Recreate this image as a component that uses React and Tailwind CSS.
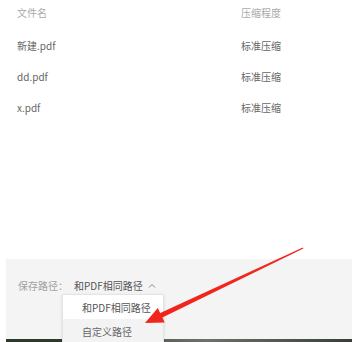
import React from "react";

const rows = [
  { name: "新建.pdf", level: "标准压缩" },
  { name: "dd.pdf", level: "标准压缩" },
  { name: "x.pdf", level: "标准压缩" },
];

const font = { fontFamily: '"Noto Sans CJK SC", "Noto Sans", sans-serif' };

function App() {
  return (
    <div
      className="relative w-[355px] h-[342px] bg-white overflow-hidden flex flex-col"
      style={font}
    >
      {/* file table */}
      <div className="pl-[17px]">
        <div className="h-[24px] flex items-center text-[10px] text-[#aaaaaa]">
          <span className="w-[224px]">文件名</span>
          <span>压缩程度</span>
        </div>
        <div className="pt-[6px]">
          {rows.map((row) => (
            <div
              key={row.name}
              className="h-[31px] flex items-center text-[10px] text-[#666666]"
            >
              <span className="w-[224px]">{row.name}</span>
              <span>{row.level}</span>
            </div>
          ))}
        </div>
      </div>

      <div className="flex-1" />

      {/* save path bar */}
      <div className="mx-[6px] mr-[3px] h-[80px] bg-[#f4f4f4] pt-[20px] pl-[12px]">
        <div className="flex items-center h-[14px] text-[10px] leading-[14px]">
          <span className="text-[#a0a0a0] w-[56px]">保存路径：</span>
          <span className="text-[#555555]">和PDF相同路径</span>
          <svg width="8" height="6" viewBox="0 0 8 6" className="ml-[5px]">
            <path d="M1 4.5 L4 1.5 L7 4.5" fill="none" stroke="#888" strokeWidth="1" />
          </svg>
        </div>
      </div>

      {/* image strip below */}
      <div className="mx-[6px] mr-[3px] h-[3px] flex">
        <div className="w-[56px] bg-[#2e3b2b]" />
        <div className="flex-1 bg-gradient-to-r from-[#3c403c] via-[#6d706b] to-[#3a3e3a]" />
      </div>

      {/* dropdown menu */}
      <div className="absolute left-[62px] top-[294px] w-[102px] border border-[#e4e4e4] bg-white shadow-sm text-[10px] text-[#555555]">
        <div className="h-[24px] flex items-center pl-[19px] bg-white">和PDF相同路径</div>
        <div className="h-[24px] flex items-center pl-[19px] bg-[#f3f3f3] text-[#666666]">自定义路径</div>
      </div>

      {/* red arrow annotation */}
      <svg
        className="absolute left-0 top-0 pointer-events-none"
        width="355"
        height="342"
        viewBox="0 0 355 342"
      >
        <polygon
          points="145,323 157.8,308.1 160.2,313 302.8,247.4 303.4,248.6 162.4,317.6 164.7,322.5"
          fill="#f2251c"
        />
      </svg>
    </div>
  );
}

export default App;
